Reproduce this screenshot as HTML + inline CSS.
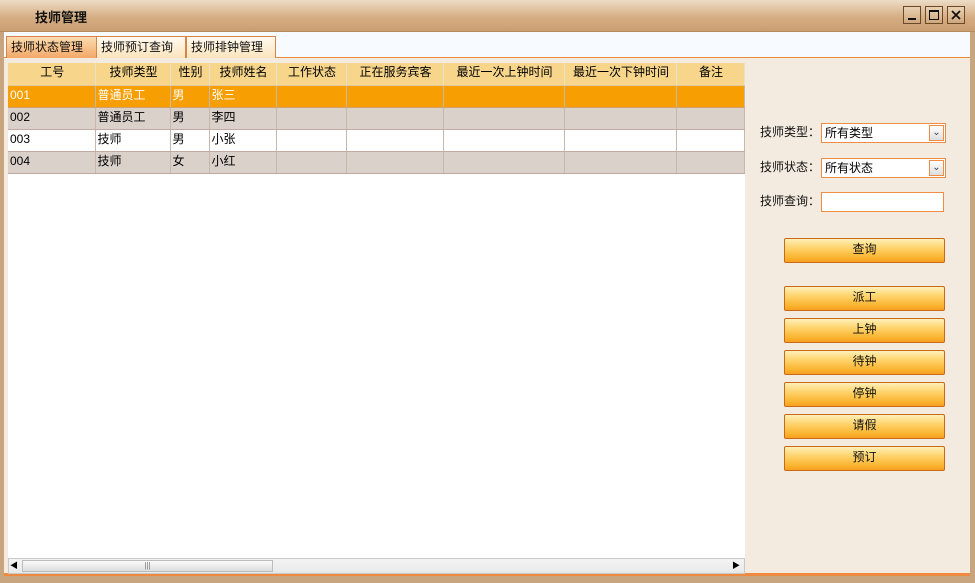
<!DOCTYPE html>
<html><head><meta charset="utf-8"><style>
*{margin:0;padding:0;box-sizing:border-box}
body{width:975px;height:583px;overflow:hidden;font-family:"Liberation Sans","Noto Sans CJK SC","WenQuanYi Zen Hei",sans-serif;font-size:12px;background:#c9a57f;position:relative}
.abs{position:absolute}
.title{left:0;top:0;width:975px;height:32px;background:linear-gradient(#ecdcc6,#d6ae84 55%,#c99d70);border-bottom:1px solid #b88b5f}
.title span{position:absolute;left:35px;top:7px;font-weight:bold;font-size:13px;color:#111}
.wb{top:6px;width:18px;height:18px;border:1px solid #6b4a2a;background:linear-gradient(#e9d2b4,#cfa77c)}
.tabbar{left:4px;top:32px;width:966px;height:26px;background:#f7fafe;border-bottom:1px solid #ee8a40}
.tab{top:36px;height:22px;border:1px solid #d5854a;border-bottom:none;background:linear-gradient(#fffaf0,#fbe4bc);padding:2px 4px 0;font-size:12px;line-height:16px;color:#111}
.content{left:4px;top:58px;width:966px;height:518px;background:#f3ebe0;border-bottom:3px solid #ee8a40}
.grid{left:8px;top:63px;width:737px;height:495px;background:#fff}
table{border-collapse:collapse;position:absolute;left:8px;top:63px;table-layout:fixed}
td,th{height:22px;border-right:1px solid #c9b7ae;border-bottom:1px solid #c2aaa0;font-weight:normal;text-align:left;padding:1px 0 0 2px;vertical-align:top;line-height:16px;font-size:12px;white-space:nowrap;overflow:hidden}
th{background:#f7d68b;text-align:center;border-right:1px solid #e9e0c8;border-bottom:1px solid #e0c8a0}
tr.sel td{background:#f79e03;color:#fff;border-bottom-color:#d4a06a}
tr.g td{background:#dad1cb}
tr.w td{background:#fff}
.lbl{left:760px;font-size:12px;color:#111;line-height:16px}
.sel2{left:821px;width:125px;height:20px;border:1px solid #ef8c45;background:#fff;padding:1px 3px;font-size:12px;line-height:16px}
.sel2 i{position:absolute;right:1px;top:1px;width:15px;height:16px;border:1px solid #ef8c45;background:linear-gradient(#fff,#ddd);font-style:normal;text-align:center;line-height:14px;font-size:10px;color:#444}
.btn{left:784px;width:161px;height:25px;border:1px solid #c76a1a;border-radius:2px;background:linear-gradient(#fff0b8,#fed36a 40%,#fbb430 80%,#f7a020);text-align:center;line-height:21px;font-size:12px;color:#111}
.sb{left:8px;top:558px;width:737px;height:16px;background:linear-gradient(#f4f4f4,#e8e8e8);border:1px solid #c8c8c8}
</style></head><body>
<div class="abs title"><span>技师管理</span></div>
<div class="abs wb" style="left:903px"><svg width="16" height="16"><rect x="4" y="11" width="8" height="2" fill="#111"/></svg></div>
<div class="abs wb" style="left:925px"><svg width="16" height="16"><rect x="3.5" y="3.5" width="9" height="9" fill="none" stroke="#111"/><rect x="3" y="3" width="10" height="2" fill="#111"/></svg></div>
<div class="abs wb" style="left:947px"><svg width="16" height="16"><path d="M4 4L12 12M12 4L4 12" stroke="#111" stroke-width="1.8"/></svg></div>
<div class="abs content"></div>
<div class="abs tabbar"></div>
<div class="abs tab" style="left:6px;width:91px;background:linear-gradient(#fbdcb0,#f4a868)">技师状态管理</div>
<div class="abs tab" style="left:96px;width:90px">技师预订查询</div>
<div class="abs tab" style="left:186px;width:90px">技师排钟管理</div>
<div class="abs grid"></div>
<table>
<colgroup><col style="width:87px"><col style="width:75px"><col style="width:39px"><col style="width:67px"><col style="width:70px"><col style="width:97px"><col style="width:121px"><col style="width:112px"><col style="width:68px"></colgroup>
<tr><th>工号</th><th>技师类型</th><th>性别</th><th>技师姓名</th><th>工作状态</th><th>正在服务宾客</th><th>最近一次上钟时间</th><th>最近一次下钟时间</th><th>备注</th></tr>
<tr class="sel"><td>001</td><td>普通员工</td><td>男</td><td>张三</td><td></td><td></td><td></td><td></td><td></td></tr>
<tr class="g"><td>002</td><td>普通员工</td><td>男</td><td>李四</td><td></td><td></td><td></td><td></td><td></td></tr>
<tr class="w"><td>003</td><td>技师</td><td>男</td><td>小张</td><td></td><td></td><td></td><td></td><td></td></tr>
<tr class="g"><td>004</td><td>技师</td><td>女</td><td>小红</td><td></td><td></td><td></td><td></td><td></td></tr>
</table>
<div class="abs sb"></div>
<div class="abs" style="left:10px;top:560px;width:10px;height:12px;font-size:8px;line-height:12px">◀</div>
<div class="abs" style="left:22px;top:560px;width:251px;height:12px;border:1px solid #bbb;background:linear-gradient(#fafafa,#ddd);font-size:8px;text-align:center;line-height:10px;color:#777">|||</div>
<div class="abs" style="left:732px;top:560px;width:10px;height:12px;font-size:8px;line-height:12px">▶</div>
<div class="abs lbl" style="top:124px">技师类型：</div>
<div class="abs sel2" style="top:123px">所有类型<i>⌄</i></div>
<div class="abs lbl" style="top:159px">技师状态：</div>
<div class="abs sel2" style="top:158px">所有状态<i>⌄</i></div>
<div class="abs lbl" style="top:193px">技师查询：</div>
<div class="abs sel2" style="top:192px;width:123px"></div>
<div class="abs btn" style="top:238px">查询</div>
<div class="abs btn" style="top:286px">派工</div>
<div class="abs btn" style="top:318px">上钟</div>
<div class="abs btn" style="top:350px">待钟</div>
<div class="abs btn" style="top:382px">停钟</div>
<div class="abs btn" style="top:414px">请假</div>
<div class="abs btn" style="top:446px">预订</div>
</body></html>
